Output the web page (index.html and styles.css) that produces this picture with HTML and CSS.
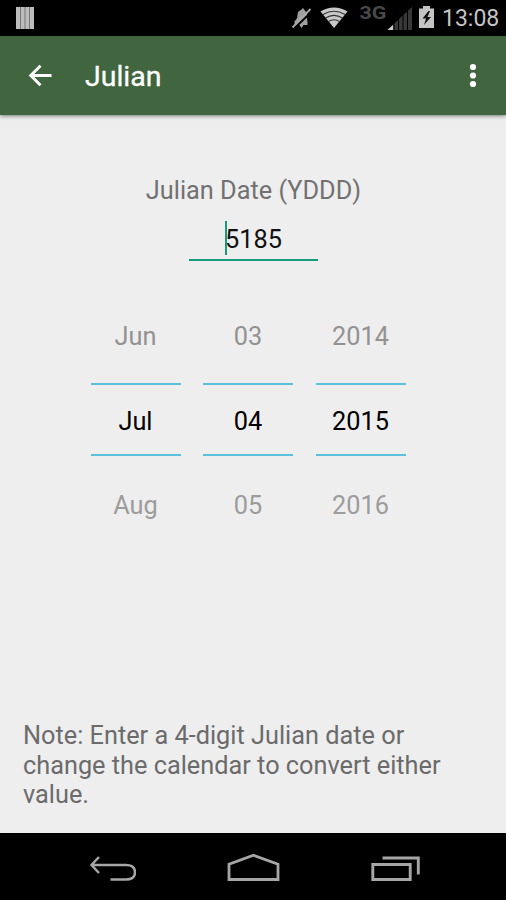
FILE: index.html
```html
<!DOCTYPE html>
<html lang="en">
<head>
<meta charset="UTF-8">
<meta name="viewport" content="width=device-width, initial-scale=1.0">
<title>Julian</title>
<link rel="stylesheet" href="styles.css">
</head>
<body>

<div class="status-bar">
  <svg class="status-left" width="18" height="22" viewBox="0 0 18 22">
    <rect width="18" height="22" fill="#bcbcbc"/>
    <path d="M4.500 0v22M9 0v22M13.500 0v22" stroke="#777" stroke-width="1"/>
  </svg>
  <svg class="status-icons" width="146" height="36" viewBox="290 0 146 36">
    <!-- muted ringer -->
    <path d="M294.500 21q3-2 3-6 0-4 3.500-5l2-2 1.500 2q2.500 2 2.500 6 0 4 .5 6v3h-4l-2 3-2-3h-5z" fill="#a0a0a0"/>
    <path d="M294 28.500L312.500 11" stroke="#000" stroke-width="2"/>
    <path d="M292.500 27.500L310.500 9" stroke="#aaa" stroke-width="1.800"/>
    <!-- wifi -->
    <path d="M320.500 11.500Q334 3.500 347.500 11.500L334 28z" fill="#c8c8c8"/>
    <path d="M323 14.500Q334 8 345 14.500M325.500 18Q334 12.800 342.500 18M328.500 21.500Q334 18 339.500 21.500" fill="none" stroke="#333" stroke-width="1.200"/>
    <!-- mobile signal -->
    <text class="network" x="359.500" y="19.300" textLength="27" lengthAdjust="spacingAndGlyphs">3G</text>
    <path d="M387 30L412 7v23z" fill="#383838"/>
    <path d="M387.500 30L393 25v5z" fill="#d0d0d0"/>
    <path d="M394 7v23M398.500 7v23M403 7v23M407.500 7v23" stroke="#000" stroke-width="1"/>
    <!-- charging battery -->
    <path d="M423 6h7v2.500h4V28h-15V8.500h4z" fill="#c4c4c4"/>
    <path d="M428.500 11l-6 7.500h3.500l-2 6.500 7-8h-3.500l2.500-6z" fill="#111"/>
  </svg>
  <span class="clock">13:08</span>
</div>

<div class="app-bar">
  <svg class="back" width="24" height="24" viewBox="0 0 24 24">
    <path d="M23.500 11.500H2.500M12.500 1.700L2.700 11.500l9.800 9.800" fill="none" stroke="#fff" stroke-width="2.900"/>
  </svg>
  <h1 class="title">Julian</h1>
  <svg class="more" width="8" height="26" viewBox="0 0 8 26">
    <circle cx="4" cy="4" r="3.100"/>
    <circle cx="4" cy="12.500" r="3.100"/>
    <circle cx="4" cy="21" r="3.100"/>
  </svg>
</div>

<div class="content">
  <label class="date-label" for="julian-date">Julian Date (YDDD)</label>
  <div class="date-field">
    <input type="text" id="julian-date" value="5185">
    <span class="caret"></span>
  </div>

  <div class="date-picker">
    <div class="picker-column">
      <span class="before">Jun</span>
      <span class="selected">Jul</span>
      <span class="after">Aug</span>
    </div>
    <div class="picker-column">
      <span class="before">03</span>
      <span class="selected">04</span>
      <span class="after">05</span>
    </div>
    <div class="picker-column">
      <span class="before">2014</span>
      <span class="selected">2015</span>
      <span class="after">2016</span>
    </div>
  </div>

  <p class="note">Note: Enter a 4-digit Julian date or change the calendar to convert either value.</p>
</div>

<div class="nav-bar">
  <svg width="48" height="30" viewBox="0 0 48 30">
    <path d="M11 4L3.500 12l7.500 8M3.500 12h34.500q9 0 9 7.200t-9 7.200H22.500" fill="none" stroke="#a6a6a6" stroke-width="2.500"/>
  </svg>
  <svg width="54" height="30" viewBox="0 0 54 30">
    <path d="M3 26.500V11.200L27.500 2.300l24.500 8.900v15.300z" fill="none" stroke="#a6a6a6" stroke-width="2.800"/>
  </svg>
  <svg width="50" height="30" viewBox="0 0 50 30">
    <path d="M2.800 11.500h37.400v15H2.800zM12.500 5h35.800v16.400" fill="none" stroke="#a6a6a6" stroke-width="2.900"/>
  </svg>
</div>

</body>
</html>
```

FILE: styles.css
```css
* {
  box-sizing: border-box;
}
body {
  font-family: Roboto, 'Noto Sans', sans-serif;
  font-size: 25.3px;
  background-color: #eee;
  color: #000;
  margin: 0;
  height: 900px;
  display: flex;
  flex-direction: column;
  overflow: hidden;
}
svg {
  display: block;
  flex: none;
}
.status-bar {
  height: 36px;
  background-color: #000;
  display: flex;
  align-items: center;
  padding: 0 8px 0 16px;
}
.status-icons {
  margin-left: auto;
}
.network {
  font-size: 18px;
  font-weight: bold;
  fill: #484848;
}
.clock {
  width: 56px;
  margin-left: 6px;
  padding-top: 2px;
  font-size: 23px;
  line-height: 36px;
  color: #c4c4c4;
}
.app-bar {
  height: 79px;
  background-color: #41663f;
  box-shadow: 0 1px 4px rgba(0,0,0,0.5);
  display: flex;
  align-items: center;
  padding: 0 29px 0 28px;
}
.title {
  margin: 3px 0 0 33px;
  font-size: 28.5px;
  font-weight: 400;
  line-height: 34px;
  color: #fff;
  -webkit-text-stroke: 0.3px #fff;
}
.more {
  margin-left: auto;
  fill: #fff;
}
.content {
  flex: 1;
  display: flex;
  flex-direction: column;
  padding: 61px 23px 23px;
}
.date-label {
  align-self: center;
  margin-left: 1px;
  line-height: 30px;
  color: #717171;
}
.date-field {
  position: relative;
  width: 129px;
  margin-left: 166px;
}
.date-field input {
  display: block;
  width: 100%;
  height: 55px;
  padding: 17px 0 3px;
  border: none;
  border-bottom: 2px solid #179b7e;
  background: none;
  font: inherit;
  text-align: center;
  color: #111;
  outline: none;
}
.caret {
  position: absolute;
  left: 36px;
  top: 15px;
  width: 2px;
  height: 34px;
  background-color: #179b7e;
}
.date-picker {
  display: flex;
  gap: 22.5px;
  margin: 51px 0 0 67.5px;
}
.picker-column {
  width: 90px;
  display: flex;
  flex-direction: column;
  text-align: center;
}
.before, .after {
  height: 71px;
  line-height: 50px;
  color: #929292;
}
.after {
  padding-top: 25px;
  color: #9c9c9c;
}
.selected {
  height: 73px;
  border-top: 2px solid #5bc0de;
  border-bottom: 2px solid #5bc0de;
  line-height: 73px;
}
.note {
  margin: auto 0 0;
  line-height: 29.7px;
  color: #6b6b6b;
}
.nav-bar {
  height: 67px;
  background-color: #000;
  display: flex;
  justify-content: space-between;
  align-items: center;
  padding: 2px 86px 0 88px;
}
```
